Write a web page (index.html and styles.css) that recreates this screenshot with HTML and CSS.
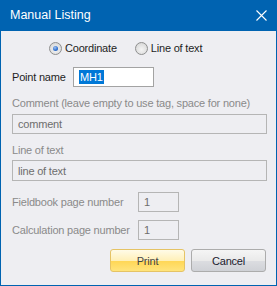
FILE: index.html
```html
<!DOCTYPE html>
<html lang="en">
<head>
    <meta charset="UTF-8">
    <meta name="viewport" content="width=device-width, initial-scale=1.0">
    <title>Manual Listing</title>
    <link rel="stylesheet" href="styles.css">
</head>
<body>
    <div class="window">
        <div class="titlebar">
            <span class="title">Manual Listing</span>
            <svg class="close" width="11" height="11" viewBox="0 0 11 11">
                <path d="M0.5 0.5 L10.5 10.5 M10.5 0.5 L0.5 10.5" stroke="#fff" stroke-width="1.1" fill="none"/>
            </svg>
        </div>

        <div class="content">
            <div class="mode-row">
                <label class="radio checked"><span class="dot"></span>Coordinate</label>
                <label class="radio"><span class="dot"></span>Line of text</label>
            </div>

            <div class="field-row point-row">
                <span class="label">Point name</span>
                <div class="box point-box"><span class="selected">MH1</span></div>
            </div>

            <div class="caption comment-caption">Comment (leave empty to use tag, space for none)</div>
            <div class="box wide">comment</div>

            <div class="caption line-caption">Line of text</div>
            <div class="box wide">line of text</div>

            <div class="field-row page-row">
                <span class="caption">Fieldbook page number</span>
                <div class="box num">1</div>
            </div>
            <div class="field-row page-row second">
                <span class="caption">Calculation page number</span>
                <div class="box num">1</div>
            </div>

            <div class="buttons">
                <button class="btn print">Print</button>
                <button class="btn">Cancel</button>
            </div>
        </div>
    </div>
</body>
</html>
```

FILE: styles.css
```css
:root {
    --title-blue: #0063b1;
    --dialog-bg: #eeeef2;
    --disabled-text: #8a8a8a;
    --box-border: #b5b5b5;
}

html, body {
    margin: 0;
    padding: 0;
}

body {
    width: 277px;
    height: 286px;
    font-family: 'Liberation Sans', Arial, sans-serif;
    font-size: 11px;
    letter-spacing: -0.2px;
    color: #1e1e1e;
}

.window {
    box-sizing: border-box;
    width: 277px;
    height: 286px;
    background: var(--dialog-bg);
    border: 1px solid var(--title-blue);
    border-top: none;
    display: flex;
    flex-direction: column;
}

.titlebar {
    height: 31px;
    margin: 0 -1px;
    background: var(--title-blue);
    display: flex;
    align-items: center;
    justify-content: space-between;
    padding: 0 10px 0 10px;
}

.title {
    font-family: 'Liberation Sans', Arial, sans-serif;
    font-size: 12.5px;
    letter-spacing: 0;
    color: #fff;
    margin-top: -1px;
}

.close {
    margin-top: -1px;
}

.content {
    padding: 10px 10px 0 11px;
    display: flex;
    flex-direction: column;
}

/* radio buttons */
.mode-row {
    display: flex;
    align-items: center;
    height: 14px;
    padding-left: 37px;
    gap: 18px;
}

.radio {
    display: flex;
    align-items: center;
    gap: 3px;
    color: #1e1e1e;
}

.dot {
    box-sizing: border-box;
    width: 13px;
    height: 13px;
    border-radius: 50%;
    border: 1px solid #8e8f8f;
    background: radial-gradient(circle at 50% 60%, #f4f4f4 0%, #dcdcdc 70%, #cfcfcf 100%);
    display: flex;
    align-items: center;
    justify-content: center;
}

.checked .dot::after {
    content: '';
    width: 5px;
    height: 5px;
    border-radius: 50%;
    background: radial-gradient(circle at 40% 35%, #9ec2f0 0%, #2f6fcf 60%, #1c4f9c 100%);
}

/* rows and boxes */
.field-row {
    display: flex;
    align-items: center;
}

.point-row {
    margin-top: 12px;
}

.point-row .label {
    width: 61px;
}

.box {
    box-sizing: border-box;
    height: 20px;
    border: 1px solid var(--box-border);
    display: flex;
    align-items: center;
    padding-left: 5px;
    color: #6d6d6d;
}

.point-box {
    width: 81px;
    background: #fff;
    border-color: #a3a3a3;
    padding-left: 5px;
}

.selected {
    background: #0078d7;
    color: #fff;
    line-height: 14px;
    padding: 0 1px;
}

.caption {
    color: var(--disabled-text);
    line-height: 14px;
}

.comment-caption {
    margin-top: 9px;
}

.line-caption {
    margin-top: 9px;
}

.wide {
    width: 255px;
    margin-top: 4px;
}

.line-caption + .wide {
    margin-top: 3px;
    height: 21px;
}

.page-row {
    margin-top: 11px;
}

.page-row.second {
    margin-top: 8px;
}

.page-row .caption {
    width: 126px;
}

.num {
    width: 41px;
}

/* buttons */
.buttons {
    display: flex;
    justify-content: flex-end;
    gap: 6px;
    margin-top: 9px;
}

.btn {
    box-sizing: border-box;
    width: 75px;
    height: 23px;
    font-family: 'Liberation Sans', Arial, sans-serif;
    font-size: 11px;
    letter-spacing: -0.2px;
    color: #1a1a2e;
    border: 1px solid #acacac;
    border-radius: 3px;
    background: linear-gradient(#f5f5f5 0%, #eaeaea 50%, #dcdde1 51%, #cfd1d6 100%);
    padding: 0;
}

.btn.print {
    color: #444;
    border-color: #e5c365;
    background: linear-gradient(#fffbe8 0%, #fff0b8 50%, #ffd654 51%, #ffe47c 100%);
}
```
